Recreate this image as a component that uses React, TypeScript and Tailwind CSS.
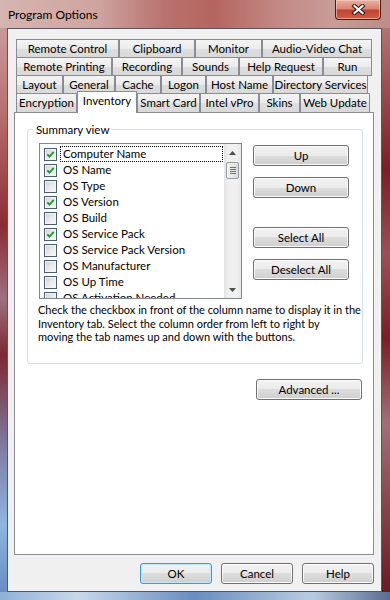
import React from "react";

type TabDef = [string, string, boolean?];

const rows: TabDef[][] = [
  [
    ["Remote Control", "w-[103px]"],
    ["Clipboard", "w-[76px]"],
    ["Monitor", "w-[67px]"],
    ["Audio-Video Chat", "w-[110px]"],
  ],
  [
    ["Remote Printing", "w-[96px]"],
    ["Recording", "w-[70px]"],
    ["Sounds", "w-[57px]"],
    ["Help Request", "w-[84px]"],
    ["Run", "w-[49px]"],
  ],
  [
    ["Layout", "w-[47px]"],
    ["General", "w-[52px]"],
    ["Cache", "w-[46px]"],
    ["Logon", "w-[45px]"],
    ["Host Name", "w-[67px]"],
    ["Directory Services", "w-[95px]"],
  ],
  [
    ["Encryption", "w-[61px]"],
    ["Inventory", "w-[60px]", true],
    ["Smart Card", "w-[63px]"],
    ["Intel vPro", "w-[59px]"],
    ["Skins", "w-[41px]"],
    ["Web Update", "w-[70px]"],
  ],
];

const items: [string, boolean][] = [
  ["Computer Name", true],
  ["OS Name", true],
  ["OS Type", false],
  ["OS Version", true],
  ["OS Build", false],
  ["OS Service Pack", true],
  ["OS Service Pack Version", false],
  ["OS Manufacturer", false],
  ["OS Up Time", false],
  ["OS Activation Needed", false],
];

const btn =
  "flex shrink-0 items-center justify-center rounded-[3px] border border-[#707070] bg-[linear-gradient(180deg,#f2f2f2_0%,#ebebeb_50%,#dddddd_50%,#cfcfcf_100%)] shadow-[inset_0_0_0_1px_#fbfbfb] text-[11.5px] leading-none text-black";

function Check({ checked }: { checked: boolean }) {
  return (
    <div className="flex h-[13px] w-[13px] shrink-0 items-center justify-center border border-[#4b5d70] bg-[linear-gradient(135deg,#cfcfcf_0%,#ececec_55%,#fbfbfb_100%)] shadow-[inset_0_0_0_1px_#f3f3f3]">
      {checked && (
        <svg width="9" height="9" viewBox="0 0 9 9">
          <path d="M1.3 4.4 L3.5 6.7 L7.8 1.9" fill="none" stroke="#1f9a2b" strokeWidth="1.9" />
        </svg>
      )}
    </div>
  );
}

function Tab({ label, w, sel, last }: { label: string; w: string; sel?: boolean; last: boolean }) {
  if (sel) {
    return (
      <div
        className={`${w} relative z-10 -mt-[2px] -mb-px flex h-[22px] shrink-0 items-center justify-center whitespace-nowrap border border-b-0 border-[#898c95] bg-white pb-[3px]`}
      >
        {label}
      </div>
    );
  }
  return (
    <div
      className={`${w} flex h-[19px] shrink-0 items-center justify-center whitespace-nowrap border border-[#898c95] bg-[linear-gradient(180deg,#f4f4f4_0%,#ebebeb_50%,#dedede_51%,#d9d9d9_100%)] ${last ? "border-b-0" : ""}`}
    >
      {label}
    </div>
  );
}

export default function App() {
  return (
    <div className="flex h-[600px] w-[390px] flex-col overflow-hidden bg-[#b07878] font-['Lato',sans-serif] text-[11.5px] text-black">
      {/* Title bar */}
      <div className="flex h-[28px] shrink-0 bg-[linear-gradient(90deg,#d6b4b0_0%,#cfa4a0_25%,#b8726e_42%,#b5655f_55%,#c28682_70%,#c99c98_85%,#bb8c88_100%)]">
        <div className="pl-[8px] pt-[7px] text-[12px] leading-[16px]">Program Options</div>
        <div className="ml-auto mr-[9px] flex h-[20px] w-[46px] items-center justify-center rounded-b-[4px] border border-t-0 border-[#4a1a18] bg-[linear-gradient(180deg,#eab0a0_0%,#d98672_45%,#c4432e_55%,#cf5e44_100%)] shadow-[inset_0_0_0_1px_rgba(255,215,205,0.55)]">
          <svg width="15" height="11" viewBox="0 0 15 11">
            <path d="M3.5 2 L11.5 9 M11.5 2 L3.5 9" stroke="#3a1410" strokeWidth="4.2" strokeLinecap="square" />
            <path d="M3.5 2 L11.5 9 M11.5 2 L3.5 9" stroke="#ffffff" strokeWidth="2.2" strokeLinecap="square" />
          </svg>
        </div>
      </div>

      <div className="flex flex-1">
        <div className="w-[7px] bg-[linear-gradient(180deg,#c99a97_0%,#b5716e_15%,#8a2c33_35%,#9c7080_48%,#7a2a34_58%,#7f7fa6_75%,#8fb5e0_88%,#6b8cc0_100%)]" />

        {/* Client area */}
        <div className="flex flex-1 flex-col border border-[#5b5560] bg-[#f0f0f0] pt-[10px]">
          {/* Tab rows */}
          <div className="ml-[8px] flex flex-col">
            {rows.map((row, ri) => (
              <div key={ri} className={`flex ${ri > 0 ? "-mt-px" : ""}`}>
                {row.map(([label, w, sel]) => (
                  <Tab key={label} label={label} w={w} sel={sel} last={ri === 3} />
                ))}
              </div>
            ))}
          </div>

          {/* Tab page */}
          <div className="ml-[6px] flex h-[443px] w-[360px] flex-col border border-[#898c95] bg-white">
            <fieldset className="ml-[12px] mt-[9px] h-[242px] w-[336px] rounded-[3px] border border-[#d5dfe5]">
              <legend className="ml-[5px] px-[3px] leading-[15px]">Summary view</legend>
              <div className="mt-[6px] flex">
                {/* Listbox */}
                <div className="ml-[11px] flex h-[156px] w-[203px] border border-[#828790] bg-white">
                  <div className="flex flex-1 flex-col overflow-hidden pt-[2px]">
                    {items.map(([name, checked], i) => (
                      <div key={name} className="flex h-[16px] shrink-0 items-center">
                        <div className="ml-[4px]">
                          <Check checked={checked} />
                        </div>
                        <div
                          className={`ml-[3px] mr-px flex h-[16px] flex-1 items-center whitespace-nowrap border px-[2px] ${
                            i === 0 ? "border-dotted border-black" : "border-transparent"
                          }`}
                        >
                          {name}
                        </div>
                      </div>
                    ))}
                  </div>
                  {/* Scrollbar */}
                  <div className="flex w-[17px] flex-col bg-[linear-gradient(90deg,#e4e4e4_0%,#efefef_25%,#f0f0f0_75%,#e8e8e8_100%)]">
                    <div className="flex h-[18px] items-center justify-center">
                      <svg width="7" height="4" viewBox="0 0 7 4">
                        <path d="M0 4 L3.5 0 L7 4 Z" fill="#4d4d4d" />
                      </svg>
                    </div>
                    <div className="mx-[2px] flex h-[17px] flex-col items-center justify-center gap-[1px] rounded-[2px] border border-[#979ca2] bg-[linear-gradient(90deg,#f3f3f3_0%,#e8e8e8_50%,#dcdcdc_100%)]">
                      <div className="h-px w-[6px] bg-[#6f6f6f]" />
                      <div className="h-px w-[6px] bg-[#6f6f6f]" />
                      <div className="h-px w-[6px] bg-[#6f6f6f]" />
                      <div className="h-px w-[6px] bg-[#6f6f6f]" />
                    </div>
                    <div className="flex-1" />
                    <div className="flex h-[17px] items-center justify-center">
                      <svg width="7" height="4" viewBox="0 0 7 4">
                        <path d="M0 0 L7 0 L3.5 4 Z" fill="#4d4d4d" />
                      </svg>
                    </div>
                  </div>
                </div>

                {/* Side buttons */}
                <div className="ml-[11px] flex flex-col">
                  <div className={`${btn} mt-[2px] h-[21px] w-[96px]`}>Up</div>
                  <div className={`${btn} mt-[11px] h-[21px] w-[96px]`}>Down</div>
                  <div className={`${btn} mt-[29px] h-[21px] w-[96px]`}>Select All</div>
                  <div className={`${btn} mt-[11px] h-[21px] w-[96px]`}>Deselect All</div>
                </div>
              </div>
              <div className="ml-[10px] mt-[4px] whitespace-nowrap text-[11px] leading-[13.5px]">
                <div>Check the checkbox in front of the column name to display it in the</div>
                <div>Inventory tab. Select the column order from left to right by</div>
                <div>moving the tab names up and down with the buttons.</div>
              </div>
            </fieldset>

            <div className={`${btn} mr-[11px] mt-[15px] h-[21px] w-[106px] self-end`}>Advanced ...</div>
          </div>

          {/* Dialog buttons */}
          <div className="mt-[8px] flex justify-end gap-[9px] pr-[7px]">
            <div className={`${btn} h-[21px] w-[72px] !border-[#3c9ad6] !shadow-[inset_0_0_0_1px_#bfe7fb]`}>OK</div>
            <div className={`${btn} h-[21px] w-[72px]`}>Cancel</div>
            <div className={`${btn} h-[21px] w-[72px]`}>Help</div>
          </div>
        </div>

        <div className="w-[8px] bg-[linear-gradient(180deg,#b27472_0%,#7a1e26_25%,#9a5058_40%,#7a1e26_55%,#a07078_70%,#6a1a22_100%)]" />
      </div>

      <div className="h-[8px] shrink-0 bg-[linear-gradient(90deg,#8fb0d8_0%,#c8d8ea_20%,#6a8cc0_50%,#b8cce0_80%,#5a6b90_100%)]" />
    </div>
  );
}
